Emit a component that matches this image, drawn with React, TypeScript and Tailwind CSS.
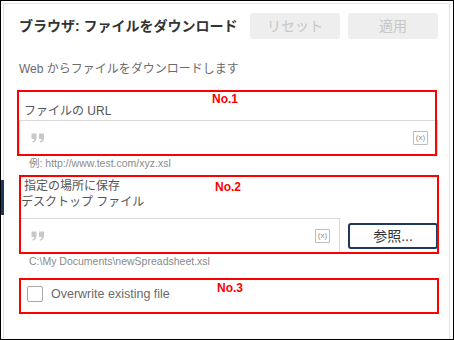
import React from 'react'

// ─── Small drawings ──────────────────────────────────────────────────────────

function QuoteMark() {
  return (
    <svg width="14" height="10" viewBox="0 0 14 10" className="shrink-0">
      <path
        d="M0.5 0.5h5v4.6c0 2.4-1.3 3.9-3.6 4.6l-0.6-1.2c1.2-0.5 1.9-1.3 2-2.4H0.5z"
        fill="#c8c8c8"
      />
      <path
        d="M8 0.5h5v4.6c0 2.4-1.3 3.9-3.6 4.6l-0.6-1.2c1.2-0.5 1.9-1.3 2-2.4H8z"
        fill="#c8c8c8"
      />
    </svg>
  )
}

function VarBadge() {
  return (
    <span className="flex h-[14px] w-[15px] items-center justify-center rounded-[1px] border border-[#bcbcbc] text-[8px] leading-none text-[#8f8f8f] [font-family:'Liberation_Sans',sans-serif]">
      (x)
    </span>
  )
}

function TextInput({ className = '' }: { className?: string }) {
  return (
    <div
      className={`flex h-[36px] items-center justify-between border border-[#d9d9d9] bg-white pl-[11px] pr-[9px] ${className}`}
    >
      <QuoteMark />
      <VarBadge />
    </div>
  )
}

// ─── Annotation overlay (red boxes) ──────────────────────────────────────────

function Marker({ label, box, tag }: { label: string; box: string; tag: string }) {
  return (
    <div className={`pointer-events-none absolute border-2 border-[#ff0000] ${box}`}>
      <span
        className={`absolute text-[12px] font-bold leading-[14px] text-[#ff0000] [font-family:'Liberation_Sans',sans-serif] ${tag}`}
      >
        {label}
      </span>
    </div>
  )
}

// ─── App ─────────────────────────────────────────────────────────────────────

export default function App() {
  return (
    <div className="relative h-[340px] w-[454px] overflow-hidden border border-black bg-white [font-family:'Liberation_Sans','Noto_Sans_CJK_JP',sans-serif]">
      <div className="h-full pl-[2px] pr-[3px] pt-[2px]">
        <div className="h-full border-l border-r border-t border-[#dfe3ea] pl-[15px] pr-[11px]">
          {/* header */}
          <div className="mt-[9px] flex items-center">
            <h1 className="flex-1 text-[14px] font-semibold leading-[20px] text-[#333333]">
              ブラウザ: ファイルをダウンロード
            </h1>
            <div className="flex gap-2">
              <button className="h-[26px] w-[90px] rounded-[3px] bg-[#eeeeee] text-[14px] text-[#c6c6c6]">
                リセット
              </button>
              <button className="h-[26px] w-[90px] rounded-[3px] bg-[#eeeeee] text-[14px] text-[#c6c6c6]">
                適用
              </button>
            </div>
          </div>

          <p className="mt-[22px] text-[12px] leading-[16px] text-[#6b6b6b]">
            Web からファイルをダウンロードします
          </p>

          {/* URL */}
          <div className="mt-[26px]">
            <label className="block pl-[5px] text-[12px] leading-[16px] text-[#555555]">ファイルの URL</label>
            <TextInput className="mt-[1px]" />
            <p className="pl-[10px] text-[10.5px] leading-[14px] text-[#8a8a8a]">例: http://www.test.com/xyz.xsl</p>
          </div>

          {/* save location */}
          <div className="mt-[8px]">
            <label className="block pl-[5px] text-[12px] leading-[16px] text-[#555555]">指定の場所に保存</label>
            <label className="block pl-[2px] text-[12px] leading-[16px] text-[#555555]">デスクトップ ファイル</label>
            <div className="mt-[8px] flex items-center gap-2">
              <TextInput className="flex-1" />
              <button className="h-[26px] w-[90px] rounded-[3px] border-2 border-[#1e3857] bg-white text-[14px] leading-none text-[#333333]">
                参照...
              </button>
            </div>
            <p className="pl-[10px] text-[10.5px] leading-[14px] text-[#8a8a8a]">
              C:\My Documents\newSpreadsheet.xsl
            </p>
          </div>

          {/* overwrite */}
          <label className="mt-[18px] flex items-center gap-2">
            <span className="ml-[8px] h-[16px] w-[16px] rounded-[2px] border border-[#a8a8a8] bg-white" />
            <span className="text-[12.5px] leading-[16px] text-[#6b6b6b]">Overwrite existing file</span>
          </label>
        </div>
      </div>

      {/* selected-step indicator */}
      <div className="absolute left-0 top-[179px] h-[35px] w-[3px] bg-[#1c3a5e]" />

      <Marker label="No.1" box="left-[16px] top-[89px] h-[66px] w-[420px]" tag="left-[193px] top-0" />
      <Marker label="No.2" box="left-[18px] top-[174px] h-[79px] w-[420px]" tag="left-[194px] top-[3px]" />
      <Marker label="No.3" box="left-[18px] top-[277px] h-[36px] w-[420px]" tag="left-[196px] top-[1px]" />
    </div>
  )
}
